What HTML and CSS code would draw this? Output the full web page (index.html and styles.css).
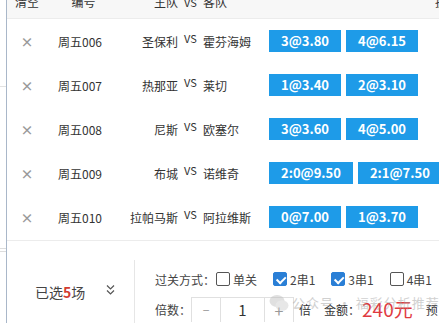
FILE: index.html
```html
<!DOCTYPE html>
<html lang="zh">
<head>
  <meta charset="UTF-8" />
  <title>投注单</title>
  <link rel="stylesheet" href="styles.css">
</head>
<body>
  <div class="page">
    <div class="side"></div>
    <div class="main">
      <div class="thead">
        <span class="c-del">清空</span>
        <span class="c-code">编号</span>
        <span class="c-home">主队</span>
        <span class="c-vs">VS</span>
        <span class="c-away">客队</span>
        <span class="c-odds">投注</span>
      </div>

      <div class="row">
        <span class="c-del">×</span>
        <span class="c-code">周五006</span>
        <span class="c-home">圣保利</span>
        <span class="c-vs">VS</span>
        <span class="c-away">霍芬海姆</span>
        <span class="c-odds"><button>3@3.80</button><button>4@6.15</button></span>
      </div>
      <div class="row">
        <span class="c-del">×</span>
        <span class="c-code">周五007</span>
        <span class="c-home">热那亚</span>
        <span class="c-vs">VS</span>
        <span class="c-away">莱切</span>
        <span class="c-odds"><button>1@3.40</button><button>2@3.10</button></span>
      </div>
      <div class="row">
        <span class="c-del">×</span>
        <span class="c-code">周五008</span>
        <span class="c-home">尼斯</span>
        <span class="c-vs">VS</span>
        <span class="c-away">欧塞尔</span>
        <span class="c-odds"><button>3@3.60</button><button>4@5.00</button></span>
      </div>
      <div class="row">
        <span class="c-del">×</span>
        <span class="c-code">周五009</span>
        <span class="c-home">布城</span>
        <span class="c-vs">VS</span>
        <span class="c-away">诺维奇</span>
        <span class="c-odds"><button>2:0@9.50</button><button>2:1@7.50</button></span>
      </div>
      <div class="row">
        <span class="c-del">×</span>
        <span class="c-code">周五010</span>
        <span class="c-home">拉帕马斯</span>
        <span class="c-vs">VS</span>
        <span class="c-away">阿拉维斯</span>
        <span class="c-odds"><button>0@7.00</button><button>1@3.70</button></span>
      </div>

      <div class="footer">
        <div class="picked">
          已选<b>5</b>场
          <svg class="chev" width="9" height="12" viewBox="0 0 9 12">
            <path d="M1 1.5 L4.5 5 L8 1.5 M1 6.5 L4.5 10 L8 6.5" fill="none" stroke="#555" stroke-width="1.2"/>
          </svg>
        </div>
        <div class="opts">
          <div class="line">
            <span class="lbl">过关方式：</span>
            <label class="chk"><i class="box"></i>单关</label>
            <label class="chk"><i class="box on"></i>2串1</label>
            <label class="chk"><i class="box on"></i>3串1</label>
            <label class="chk"><i class="box"></i>4串1</label>
          </div>
          <div class="line">
            <span class="lbl">倍数：</span>
            <div class="stepper">
              <span class="minus">−</span>
              <span class="num">1</span>
              <span class="plus">+</span>
            </div>
            <span class="bei">倍</span>
            <span class="amount">金额：<em>240元</em></span>
            <span class="pre">预</span>
          </div>
        </div>
        <div class="wm">
          <svg width="20" height="18" viewBox="0 0 20 18">
            <ellipse cx="8" cy="7" rx="7.5" ry="6" fill="#bbb"/>
            <ellipse cx="13" cy="11.5" rx="6.5" ry="5.2" fill="#ccc"/>
          </svg>
          <span>公众号 · 福彩分析推荐</span>
        </div>
      </div>
    </div>
  </div>
</body>
</html>
```

FILE: styles.css
```css
body {
  margin: 0;
  font-family: "Noto Sans CJK SC", "Microsoft YaHei", sans-serif;
  color: #333;
  background-color: white;
  font-size: 12px;
}
.page {
  display: flex;
  width: 439px;
  height: 323px;
  overflow: hidden;
}
.side {
  width: 6px;
  flex: none;
  border-right: 1px solid #a9b7c9;
  background: linear-gradient(#fff 86px, #e2e2e2 86px, #e2e2e2 87px, #fff 87px, #fff 248px, #ddd 248px, #ddd 249px, #fff 249px, #fff 251px, #ddd 251px, #ddd 252px, #fff 252px);
}
.main {
  flex: 1;
  position: relative;
}
.thead {
  display: flex;
  align-items: flex-start;
  height: 18px;
  background-color: #f7f7f7;
  border-bottom: 1px solid #ececec;
  overflow: hidden;
  white-space: nowrap;
}
.thead span {
  line-height: 16px;
  margin-top: -6px;
}
.row {
  display: flex;
  align-items: center;
  height: 44px;
  white-space: nowrap;
}
.c-del {
  width: 40px;
  flex: none;
  text-align: center;
}
.row .c-del {
  color: #999;
  font-size: 13px;
  font-weight: bold;
}
.c-code {
  width: 73px;
  flex: none;
  text-align: center;
}
.row .c-code {
  text-align: left;
  padding-left: 11px;
  width: 62px;
}
.c-home {
  width: 58px;
  flex: none;
  text-align: right;
}
.c-vs {
  width: 25px;
  flex: none;
  text-align: center;
  font-size: 11px;
  position: relative;
  top: -3px;
}
.thead .c-vs {
  top: 0;
}
.c-away {
  width: 66px;
  flex: none;
}
.thead .c-odds {
  padding-left: 166px;
}
.c-odds {
  display: flex;
  gap: 5px;
}
.c-odds button {
  height: 22px;
  padding: 0 12px;
  min-width: 66px;
  border: none;
  background-color: #1e9be8;
  color: white;
  font-family: inherit;
  font-size: 13px;
  font-weight: bold;
  line-height: 22px;
}
.footer {
  display: flex;
  margin-top: 1px;
  border-top: 1px solid #ececec;
  padding-top: 19px;
  height: 63px;
  position: relative;
}
.picked {
  width: 99px;
  flex: none;
  display: flex;
  align-items: center;
  padding-left: 28px;
  font-size: 14px;
  color: #444;
  white-space: nowrap;
}
.picked b {
  color: #d23b30;
}
.chev {
  margin-left: 21px;
  margin-top: -4px;
}
.opts {
  border-left: 1px solid #e6e6e6;
  padding: 7px 0 0 20px;
  white-space: nowrap;
}
.line {
  display: flex;
  align-items: center;
  height: 24px;
}
.line + .line {
  margin-top: 6px;
}
.lbl {
  color: #444;
}
.chk {
  display: flex;
  align-items: center;
  margin-left: 1px;
  margin-right: 15px;
  color: #444;
}
.box {
  width: 12px;
  height: 12px;
  border: 1px solid #555;
  border-radius: 2px;
  margin-right: 3px;
  background: white;
  position: relative;
}
.box.on {
  border-color: #2a7fd6;
  background-color: #2a7fd6;
}
.box.on::after {
  content: "";
  position: absolute;
  left: 2px;
  top: 1px;
  width: 7px;
  height: 4px;
  border-left: 2px solid white;
  border-bottom: 2px solid white;
  transform: rotate(-45deg) translate(-1px, 2px);
}
.stepper {
  display: flex;
  margin-left: 0;
  height: 24px;
  border: 1px solid #e0e0e0;
  border-bottom: none;
}
.stepper span {
  display: flex;
  align-items: center;
  justify-content: center;
  color: #999;
}
.minus {
  width: 28px;
  border-right: 1px solid #e0e0e0;
}
.num {
  width: 43px;
  font-size: 15px;
  color: #333 !important;
  border-right: 1px solid #e0e0e0;
}
.plus {
  width: 28px;
  font-size: 16px;
}
.bei {
  margin-left: 5px;
}
.amount {
  display: flex;
  align-items: center;
  margin-left: 13px;
  height: 24px;
}
.amount em {
  font-style: normal;
  font-size: 19px;
  line-height: 24px;
  margin-left: 2px;
  color: #df3a3f;
}
.pre {
  margin-left: 13px;
}
.wm {
  position: absolute;
  left: 262px;
  top: 52px;
  display: flex;
  align-items: center;
  gap: 3px;
  opacity: 0.45;
  color: #999;
  font-size: 13px;
  letter-spacing: 1px;
  white-space: nowrap;
  pointer-events: none;
}
```
